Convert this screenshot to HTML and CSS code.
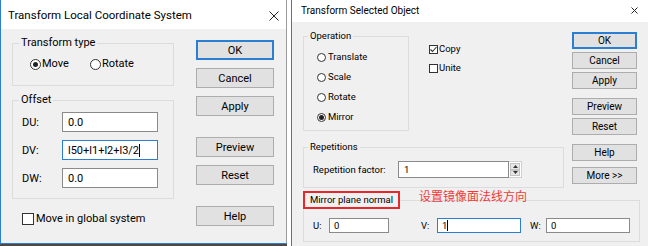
FILE: index.html
```html
<!DOCTYPE html>
<html lang="en">
<head>
  <meta charset="UTF-8">
  <title>Transform dialogs</title>
  <link rel="stylesheet" href="styles.css">
</head>
<body>

  <div class="screen">

    <!-- left dialog -->
    <div class="frame-local">
      <div class="dialog dialog-local">
        <div class="titlebar">
          <span class="title">Transform Local Coordinate System</span>
          <svg class="close" width="10" height="10" viewBox="0 0 10 10"><path d="M0.5 0.5 L9.5 9.5 M9.5 0.5 L0.5 9.5" stroke="#222" stroke-width="1"/></svg>
        </div>
        <div class="dialog-body">
          <div class="main-col">
            <fieldset class="group group-type">
              <legend>Transform type</legend>
              <div class="radio-row">
                <label class="radio"><span class="radio-mark checked"></span>Move</label>
                <label class="radio radio-rotate"><span class="radio-mark"></span>Rotate</label>
              </div>
            </fieldset>
            <fieldset class="group group-offset">
              <legend>Offset</legend>
              <div class="field"><span class="field-label">DU:</span><span class="textbox">0.0</span></div>
              <div class="field"><span class="field-label">DV:</span><span class="textbox focused">l50+l1+l2+l3/2<span class="caret"></span></span></div>
              <div class="field"><span class="field-label">DW:</span><span class="textbox">0.0</span></div>
            </fieldset>
            <label class="check check-global"><span class="check-mark"></span>Move in global system</label>
          </div>
          <div class="button-col">
            <button class="btn btn-default">OK</button>
            <button class="btn">Cancel</button>
            <button class="btn">Apply</button>
            <button class="btn btn-sep">Preview</button>
            <button class="btn">Reset</button>
            <button class="btn btn-sep">Help</button>
          </div>
        </div>
      </div>
    </div>

    <!-- right dialog -->
    <div class="dialog dialog-object">
      <div class="titlebar">
        <span class="title">Transform Selected Object</span>
        <svg class="close" width="7" height="7" viewBox="0 0 7 7"><path d="M0.5 0.5 L6.5 6.5 M6.5 0.5 L0.5 6.5" stroke="#222" stroke-width="1"/></svg>
      </div>
      <div class="dialog-body">
        <div class="top-row">
          <div class="left-area">
            <div class="op-row">
              <fieldset class="group group-op">
                <legend>Operation</legend>
                <label class="radio"><span class="radio-mark"></span>Translate</label>
                <label class="radio"><span class="radio-mark"></span>Scale</label>
                <label class="radio"><span class="radio-mark"></span>Rotate</label>
                <label class="radio"><span class="radio-mark checked"></span>Mirror</label>
              </fieldset>
              <div class="check-col">
                <label class="check"><span class="check-mark">
                  <svg width="9" height="9" viewBox="0 0 9 9"><path d="M1.5 4.5 L3.5 6.5 L7.5 2" fill="none" stroke="#333" stroke-width="1.1"/></svg>
                </span>Copy</label>
                <label class="check"><span class="check-mark"></span>Unite</label>
              </div>
            </div>
            <fieldset class="group group-rep">
              <legend>Repetitions</legend>
              <div class="field">
                <span class="field-label">Repetition factor:</span>
                <span class="textbox">1</span>
                <span class="spinner">
                  <span class="spin-btn"><svg width="5" height="3" viewBox="0 0 5 3"><path d="M0 3 L2.5 0 L5 3 Z" fill="#333"/></svg></span>
                  <span class="spin-btn"><svg width="5" height="3" viewBox="0 0 5 3"><path d="M0 0 L2.5 3 L5 0 Z" fill="#333"/></svg></span>
                </span>
              </div>
            </fieldset>
          </div>
          <div class="button-col">
            <button class="btn btn-default">OK</button>
            <button class="btn">Cancel</button>
            <button class="btn">Apply</button>
            <button class="btn btn-sep">Preview</button>
            <button class="btn">Reset</button>
            <button class="btn btn-sep">Help</button>
            <button class="btn btn-more">More &gt;&gt;</button>
          </div>
        </div>
        <fieldset class="group group-mirror">
          <legend>Mirror plane normal</legend>
          <div class="uvw-row">
            <span class="field-label">U:</span><span class="textbox tb-u">0</span>
            <span class="field-label label-v">V:</span><span class="textbox tb-v focused">1<span class="caret"></span></span>
            <span class="field-label label-w">W:</span><span class="textbox tb-w">0</span>
          </div>
        </fieldset>
      </div>
      <span class="note">设置镜像面法线方向</span>
    </div>

  </div>

</body>
</html>
```

FILE: styles.css
```css
* {
  box-sizing: border-box;
}

body {
  margin: 0;
  background-color: #fff;
  font-family: 'Roboto', 'Noto Sans', sans-serif;
  color: #000;
}

.screen {
  display: flex;
  width: 648px;
  height: 246px;
  overflow: hidden;
}

/* common window parts */
.dialog {
  background-color: #f0f0f0;
  display: flex;
  flex-direction: column;
}

.titlebar {
  background-color: #fff;
  display: flex;
  align-items: center;
  justify-content: space-between;
}

.group {
  margin: 0;
  border: 1px solid #dcdcdc;
  padding: 0;
  min-width: 0;
}

.group legend {
  padding: 0 2px;
}

.btn {
  display: block;
  width: 100%;
  margin: 0;
  padding: 0;
  font-family: inherit;
  color: #000;
  background-color: #e1e1e1;
  border: 1px solid #adadad;
}

.btn-default {
  border: 2px solid #2a7fd2;
}

.textbox {
  display: inline-flex;
  align-items: center;
  background-color: #fff;
  border: 1px solid #8a8a8a;
}

.textbox.focused {
  border-color: #2a7fd2;
}

.caret {
  display: inline-block;
  width: 1px;
  background-color: #000;
}

.radio, .check {
  display: flex;
  align-items: center;
}

.radio-mark {
  border: 1px solid #333;
  border-radius: 50%;
  background-color: #fff;
  display: flex;
  align-items: center;
  justify-content: center;
}

.radio-mark.checked::after {
  content: "";
  border-radius: 50%;
  background-color: #222;
}

.check-mark {
  border: 1px solid #333;
  background-color: #fff;
  display: flex;
}

/* left dialog */
.frame-local {
  width: 287px;
  height: 246px;
  background-color: #4a4a4a;
  flex-shrink: 0;
}

.dialog-local {
  height: 244px;
  border-left: 1px solid #2b7fd3;
  border-right: 1px solid #9a9a9a;
  border-bottom: 1px solid #2b7fd3;
  font-size: 11px;
}

.dialog-local .titlebar {
  height: 29px;
  padding: 1px 7px 0 7px;
}

.dialog-local .title {
  font-size: 11.5px;
}

.dialog-local .close {
  margin-top: 2px;
}

.dialog-local .dialog-body {
  display: flex;
  padding-left: 11px;
}

.dialog-local .main-col {
  width: 162px;
}

.dialog-local .group {
  padding: 0 0 0 6px;
}

.dialog-local .group legend {
  line-height: 14px;
}

.group-type {
  margin-top: 7px;
  padding-bottom: 14px !important;
}

.radio-row {
  display: flex;
  margin: 7px 0 0 11px;
  line-height: 14px;
}

.dialog-local .radio-mark {
  width: 11px;
  height: 11px;
  margin-right: 1px;
}

.dialog-local .radio-mark.checked::after {
  width: 5px;
  height: 5px;
}

.radio-rotate {
  margin-left: 21px;
}

.group-offset {
  margin-top: 7px;
  padding-bottom: 10px !important;
}

.group-offset .field {
  display: flex;
  align-items: center;
  margin: 5px 0 0 3px;
}

.group-offset .field + .field {
  margin-top: 8px;
}

.group-offset .field-label {
  width: 40px;
}

.group-offset .textbox {
  width: 96px;
  height: 20px;
  padding-left: 5px;
}

.group-offset .caret {
  height: 13px;
}

.check-global {
  margin: 13px 0 0 10px;
  line-height: 14px;
}

.check-global .check-mark {
  width: 12px;
  height: 12px;
  margin-right: 2px;
}

.dialog-local .button-col {
  width: 78px;
  margin: 11px 0 0 22px;
}

.dialog-local .btn {
  height: 20px;
  font-size: 11px;
  margin-top: 8px;
}

.dialog-local .btn:first-child {
  margin-top: 0;
}

.dialog-local .btn-sep {
  margin-top: 21px;
}

/* right dialog */
.dialog-object {
  position: relative;
  margin-left: 4px;
  width: 357px;
  height: 246px;
  flex-shrink: 0;
  border-left: 1px solid #2b7fd3;
  font-size: 9.5px;
}

.dialog-object .titlebar {
  height: 22px;
  padding: 0 10px 1px 9px;
}

.dialog-object .title {
  font-size: 10px;
}

.dialog-object .dialog-body {
  padding-left: 11px;
}

.top-row {
  display: flex;
}

.left-area {
  width: 261px;
}

.op-row {
  display: flex;
}

.dialog-object .group legend {
  line-height: 12px;
}

.group-op {
  width: 106px;
  margin-top: 8px;
  padding: 0 0 6px 4px;
}

.group-op .radio {
  margin: 6px 0 0 9px;
  line-height: 14px;
}

.group-op .radio:first-of-type {
  margin-top: 8px;
}

.dialog-object .radio-mark {
  width: 9px;
  height: 9px;
  margin-right: 2px;
}

.dialog-object .radio-mark.checked::after {
  width: 5px;
  height: 5px;
}

.check-col {
  margin: 20px 0 0 20px;
}

.check-col .check {
  line-height: 14px;
  margin-bottom: 5px;
}

.check-col .check-mark {
  width: 9px;
  height: 9px;
  margin-right: 1px;
  position: relative;
}

.check-col .check-mark svg {
  position: absolute;
  left: -1px;
  top: -1px;
}

.group-rep {
  margin-top: 10px;
  padding: 0 0 9px 4px;
}

.group-rep .field {
  display: flex;
  align-items: center;
  margin: 8px 0 0 5px;
}

.group-rep .field-label {
  width: 85px;
}

.group-rep .textbox {
  width: 111px;
  height: 17px;
  padding-left: 5px;
}

.spinner {
  width: 13px;
  height: 17px;
  display: flex;
  flex-direction: column;
  padding: 1px;
  background-color: #fff;
  border: 1px solid #d0d0d0;
  border-left: none;
}

.spin-btn {
  flex: 1;
  display: flex;
  align-items: center;
  justify-content: center;
  background-color: #e6e6e6;
  border: 1px solid #c4c4c4;
}

.dialog-object .button-col {
  width: 65px;
  margin: 10px 0 0 8px;
}

.dialog-object .btn {
  height: 17px;
  font-size: 10px;
  margin-top: 3px;
}

.dialog-object .btn:first-child {
  margin-top: 0;
}

.dialog-object .btn-sep {
  margin-top: 9px;
}

.dialog-object .btn-more {
  margin-top: 6px;
}

.group-mirror {
  width: 337px;
  margin-top: 3px;
  padding: 0 0 8px 0;
}

.group-mirror legend {
  width: 97px;
  margin-left: -1px;
  padding: 0 0 0 5px;
  line-height: 14px !important;
  border: 2px solid #e8262b;
  white-space: nowrap;
}

.uvw-row {
  display: flex;
  align-items: center;
  margin: 9px 0 0 9px;
}

.uvw-row .field-label {
  width: 16px;
}

.uvw-row .textbox {
  height: 15px;
  padding-left: 4px;
}

.uvw-row .caret {
  height: 11px;
}

.tb-u {
  width: 60px;
}

.label-v {
  margin-left: 32px;
}

.tb-v, .tb-w {
  width: 84px;
}

.label-w {
  margin-left: 9px;
}

.note {
  position: absolute;
  left: 127px;
  top: 188px;
  font-family: 'Noto Sans CJK SC', sans-serif;
  font-size: 12px;
  line-height: 16px;
  color: #f03a3a;
}
```
